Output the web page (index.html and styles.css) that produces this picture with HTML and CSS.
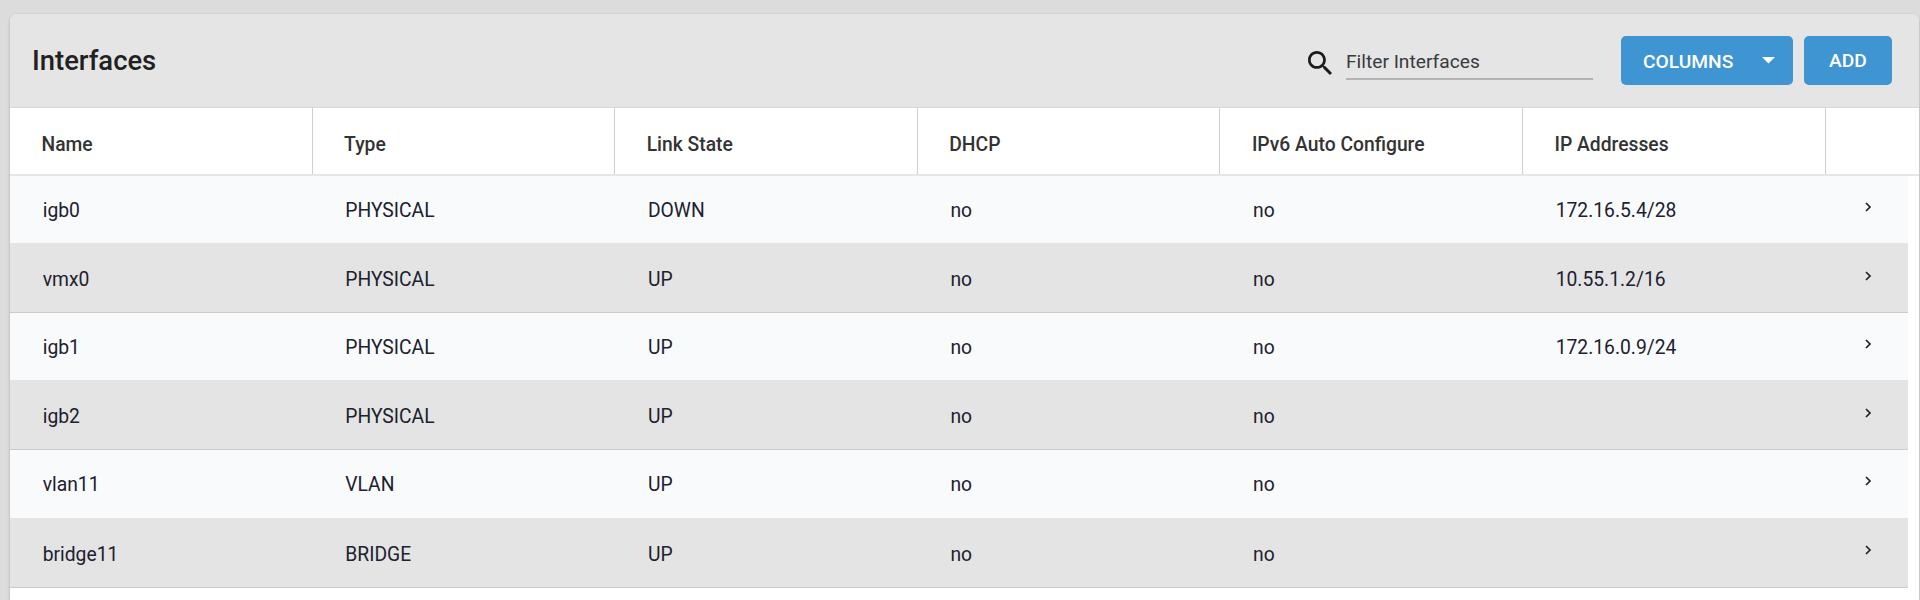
FILE: index.html
```html
<!DOCTYPE html>
<html lang="en">
<head>
    <meta charset="UTF-8">
    <meta name="viewport" content="width=device-width, initial-scale=1.0">
    <title>Interfaces</title>
    <link rel="stylesheet" href="styles.css">
</head>
<body>
    <div class="card">
        <div class="toolbar">
            <h3 class="title">Interfaces</h3>
            <div class="search">
                <svg class="search-icon" viewBox="3 3 17.49 17.49"><path d="M15.5 14h-.79l-.28-.27C15.41 12.59 16 11.11 16 9.5 16 5.91 13.09 3 9.5 3S3 5.91 3 9.5 5.91 16 9.5 16c1.61 0 3.09-.59 4.23-1.57l.27.28v.79l5 4.99L20.49 19l-4.99-5zm-6 0C7.01 14 5 11.99 5 9.5S7.01 5 9.5 5 14 7.01 14 9.5 11.99 14 9.5 14z"/></svg>
                <input class="filter" type="text" placeholder="Filter Interfaces">
            </div>
            <button class="btn btn-columns"><span>COLUMNS</span><svg class="caret" viewBox="0 0 12 6"><path d="M0 0h12L6 6z"/></svg></button>
            <button class="btn btn-add">ADD</button>
        </div>

        <div class="table-header">
            <div>Name</div>
            <div>Type</div>
            <div>Link State</div>
            <div>DHCP</div>
            <div>IPv6 Auto Configure</div>
            <div>IP Addresses</div>
            <div></div>
        </div>
        <div class="table-body" id="interfaceRows"></div>
    </div>

    <script src="script.js"></script>
</body>
</html>
```
FILE: styles.css
```css
* {
    margin: 0;
    padding: 0;
    box-sizing: border-box;
    font-family: Roboto, sans-serif;
}

body {
    background: #dcdcdc;
    height: 600px;
    padding: 14px 1px 0 10px;
    overflow: hidden;
}

.card {
    height: 586px;
    background: #fff;
    border-radius: 7px 7px 0 0;
    overflow: hidden;
    box-shadow: 0 1px 3px rgba(0, 0, 0, 0.25);
}

.toolbar {
    display: flex;
    align-items: center;
    height: 94px;
    padding: 0 27px 0 22px;
    background: #e5e5e5;
    border-bottom: 1px solid #d8d8d8;
}

.title {
    flex: 1;
    font-size: 27.4px;
    font-weight: 500;
    color: #212121;
}

.search {
    display: flex;
    align-items: center;
    margin-right: 28px;
}

.search-icon {
    width: 24px;
    height: 24px;
    margin: 4px 14px 0 0;
    fill: #1c1c1c;
}

.filter {
    width: 247px;
    height: 38px;
    padding-top: 3px;
    border: none;
    border-bottom: 2px solid #b3b3b3;
    background: transparent;
    font-size: 19.2px;
    outline: none;
}

.filter::placeholder {
    color: #3a3a3a;
}

.btn {
    height: 49px;
    border: none;
    border-radius: 5px;
    background: #3e95d1;
    color: #fff;
    font-size: 19.2px;
    font-weight: 500;
}

.btn-columns {
    display: flex;
    align-items: center;
    justify-content: space-between;
    width: 172px;
    padding: 2px 18px 0 22px;
    margin-right: 11px;
}

.btn-add {
    width: 88px;
}

.caret {
    width: 13px;
    height: 6.5px;
    margin-top: -2px;
    fill: #fff;
}

.table-header,
.row {
    display: grid;
    grid-template-columns: repeat(6, 302.6px) 1fr;
}

.table-header {
    height: 68px;
    border-bottom: 2px solid #e6e6e6;
    font-size: 19.3px;
    font-weight: 500;
    color: #333;
}

.table-header div {
    height: 66px;
    padding: 4px 0 0 31.5px;
    line-height: 66px;
    border-right: 1px solid #cfcfcf;
}

.table-header div:last-child {
    border-right: none;
}

.table-body {
    margin-right: 11px;
}

.row {
    height: 67.3px;
    background: #f9fafc;
    font-size: 19.3px;
    line-height: 69px;
    color: #20202e;
}

.row:nth-child(even) {
    height: 69.9px;
    line-height: 73px;
    background: #e4e4e4;
    border-bottom: 1px solid #cbcbcb;
}

.row div {
    padding-left: 32.7px;
}

.row .expand {
    display: flex;
    align-items: center;
    height: 67px;
    padding: 0 0 5px 39px;
}

.row:nth-child(even) .expand {
    height: 70px;
}

.chevron {
    width: 7px;
    height: 10px;
    fill: none;
    stroke: #20202e;
    stroke-width: 1.7;
}
```
FILE: script.js
```js
const interfaces = [
    ['igb0', 'PHYSICAL', 'DOWN', 'no', 'no', '172.16.5.4/28'],
    ['vmx0', 'PHYSICAL', 'UP', 'no', 'no', '10.55.1.2/16'],
    ['igb1', 'PHYSICAL', 'UP', 'no', 'no', '172.16.0.9/24'],
    ['igb2', 'PHYSICAL', 'UP', 'no', 'no', ''],
    ['vlan11', 'VLAN', 'UP', 'no', 'no', ''],
    ['bridge11', 'BRIDGE', 'UP', 'no', 'no', '']
];

const body = document.getElementById('interfaceRows');

interfaces.forEach(item => {
    const row = document.createElement('div');
    row.className = 'row';
    row.innerHTML = item.map(value => `<div>${value}</div>`).join('') +
        '<div class="expand"><svg class="chevron" viewBox="0 0 7 10"><path d="M1 1l4 4-4 4"/></svg></div>';
    body.appendChild(row);
});
```
